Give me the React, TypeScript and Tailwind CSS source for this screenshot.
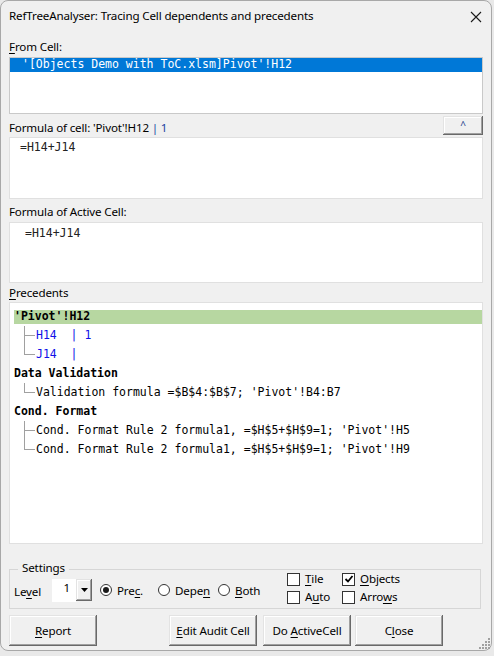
import React from "react";

const btn3d =
  "bg-[#f0f0f0] shadow-[inset_-1px_-1px_0_#696969,inset_1px_1px_0_#e3e3e3,inset_-2px_-2px_0_#a0a0a0,inset_2px_2px_0_#ffffff]";

function U({ children }: { children: React.ReactNode }) {
  return <span className="underline underline-offset-[2px]">{children}</span>;
}

function Connector({ last }: { last: boolean }) {
  return (
    <div className="flex h-full w-[22px] shrink-0 flex-col">
      <div className="ml-[10px] h-1/2 w-[11px] border-b border-l border-[#a0a0a0]" />
      <div className={"ml-[10px] h-1/2 w-[11px] " + (last ? "" : "border-l border-[#a0a0a0]")} />
    </div>
  );
}

function Radio({ checked, label, w }: { checked: boolean; label: React.ReactNode; w: string }) {
  return (
    <div className={"flex items-center gap-[5px] " + w}>
      <div className="flex h-[12px] w-[12px] items-center justify-center rounded-full border border-[#333] bg-white">
        {checked && <div className="h-[6px] w-[6px] rounded-full bg-[#1a1a1a]" />}
      </div>
      <span>{label}</span>
    </div>
  );
}

function Check({ checked, label }: { checked: boolean; label: React.ReactNode }) {
  return (
    <div className="flex h-[18px] items-center gap-[5px]">
      <div className="flex h-[13px] w-[13px] items-center justify-center border border-[#333] bg-white">
        {checked && (
          <svg width="10" height="10" viewBox="0 0 10 10">
            <path d="M1.5 5 L4 7.5 L8.5 2" fill="none" stroke="#000" strokeWidth="1.8" />
          </svg>
        )}
      </div>
      <span className="-mt-[1px]">{label}</span>
    </div>
  );
}

export default function App() {
  const mono = "font-['DejaVu_Sans_Mono',monospace] text-[11.5px] tracking-normal";
  return (
    <div className="relative h-[656px] w-[494px] overflow-hidden bg-[#e9e9e9] font-['Noto_Sans',sans-serif] text-[11.6px] tracking-[-0.15px] text-black">
      <div className="relative flex h-[651px] w-[492px] flex-col rounded-[8px] border border-[#a8a8a8] bg-[#f0f0f0]">
        {/* title bar */}
        <div className="flex h-[31px] shrink-0 items-center justify-between pl-[8px] pr-[9px]">
          <span className="-mt-[1px] leading-[16px]">RefTreeAnalyser: Tracing Cell dependents and precedents</span>
          <svg width="12" height="12" viewBox="0 0 12 12">
            <path d="M1 1 L11 11 M11 1 L1 11" stroke="#1a1a1a" strokeWidth="1.1" />
          </svg>
        </div>

        <div className="flex flex-col px-[8px]">
          <div className="mt-[7px] leading-[16px]">
            <U>F</U>rom Cell:
          </div>
          <div className="mt-[2px] h-[57px] border border-[#c9c9c9] bg-white">
            <div className={"flex h-[14px] items-center bg-[#0078d7] pl-[12px] text-white " + mono}>
              '[Objects Demo with ToC.xlsm]Pivot'!H12
            </div>
          </div>

          <div className="flex h-[23px] items-end justify-between">
            <div className="mb-[1px] leading-[16px]">
              Formula of cell: 'Pivot'!H12 <span className="text-[#1b3fa0]">| 1</span>
            </div>
            <div className={"mb-[2px] flex h-[19px] w-[40px] items-center justify-center text-[10px] text-[#1a3a8a] " + btn3d}>
              ^
            </div>
          </div>
          <div className="h-[62px] border border-[#e0e0e0] bg-white pl-[10px] pt-[2px]">
            <div className={"leading-[14px] text-[#222] " + mono}>=H14+J14</div>
          </div>

          <div className="mt-[5px] leading-[16px]">Formula of Active Cell:</div>
          <div className="mt-[2px] h-[61px] border border-[#e0e0e0] bg-white pl-[15px] pt-[3px]">
            <div className={"leading-[14px] text-[#222] " + mono}>=H14+J14</div>
          </div>

          <div className="mt-[2px] leading-[16px]">
            <U>P</U>recedents
          </div>
          <div className={"mt-[1px] h-[242px] border border-[#e0e0e0] bg-white pl-[4px] pt-[4px] " + mono}>
            <div className="flex h-[19px] items-center">
              <div className="flex h-[14px] w-full items-center bg-[#b7d7a1] font-bold">'Pivot'!H12</div>
            </div>
            <div className="flex h-[19px] items-center text-[#1010e8]">
              <Connector last={false} />
              <span className="whitespace-pre">H14  | 1</span>
            </div>
            <div className="flex h-[19px] items-center text-[#1010e8]">
              <Connector last={true} />
              <span className="whitespace-pre">J14  |</span>
            </div>
            <div className="flex h-[19px] items-center font-bold">Data Validation</div>
            <div className="flex h-[19px] items-center">
              <Connector last={true} />
              <span className="whitespace-pre">Validation formula =$B$4:$B$7; 'Pivot'!B4:B7</span>
            </div>
            <div className="flex h-[19px] items-center font-bold">Cond. Format</div>
            <div className="flex h-[19px] items-center">
              <Connector last={false} />
              <span className="whitespace-pre">Cond. Format Rule 2 formula1, =$H$5+$H$9=1; 'Pivot'!H5</span>
            </div>
            <div className="flex h-[19px] items-center">
              <Connector last={true} />
              <span className="whitespace-pre">Cond. Format Rule 2 formula1, =$H$5+$H$9=1; 'Pivot'!H9</span>
            </div>
          </div>

          {/* settings group */}
          <div className="relative mt-[25px] flex h-[40px] w-[472px] items-start border border-[#d6d6d6] pl-[4px]">
            <span className="absolute -top-[10px] left-[8px] bg-[#f0f0f0] px-[4px] leading-[16px]">Settings</span>
            <div className="mt-[9px] flex h-[23px] items-center">
              <span className="w-[38px] pt-[2px]">
                Le<U>v</U>el
              </span>
              <div className="flex h-[23px] w-[40px]">
                <div className="flex h-full w-[24px] items-start justify-end bg-white pr-[6px]">1</div>
                <div className={"flex h-[22px] w-[16px] items-center justify-center " + btn3d}>
                  <svg width="7" height="4" viewBox="0 0 7 4">
                    <path d="M0 0 H7 L3.5 4 Z" fill="#000" />
                  </svg>
                </div>
              </div>
              <div className="ml-[8px] flex items-center">
                <Radio checked={true} w="w-[58px]" label={<>Pre<U>c</U>.</>} />
                <Radio checked={false} w="w-[60px]" label={<>Depe<U>n</U></>} />
                <Radio checked={false} w="w-[69px]" label={<><U>B</U>oth</>} />
              </div>
            </div>
            <div className="flex w-[55px] flex-col">
              <Check checked={false} label={<><U>T</U>ile</>} />
              <Check checked={false} label={<>A<U>u</U>to</>} />
            </div>
            <div className="flex flex-col">
              <Check checked={true} label={<><U>O</U>bjects</>} />
              <Check checked={false} label={<>Arro<U>w</U>s</>} />
            </div>
          </div>

          {/* buttons */}
          <div className="mt-[6px] flex h-[31px]">
            <div className={"flex h-full w-[88px] items-center justify-center " + btn3d}>
              <span><U>R</U>eport</span>
            </div>
            <div className={"ml-[72px] flex h-full w-[88px] items-center justify-center " + btn3d}>
              <span><U>E</U>dit Audit Cell</span>
            </div>
            <div className={"ml-[6px] flex h-full w-[88px] items-center justify-center " + btn3d}>
              <span>Do <U>A</U>ctiveCell</span>
            </div>
            <div className={"ml-[4px] flex h-full w-[88px] items-center justify-center " + btn3d}>
              <span>C<U>l</U>ose</span>
            </div>
          </div>
        </div>

        <svg className="absolute bottom-[1px] right-[1px]" width="12" height="12" viewBox="0 0 12 12">
          {[
            [10, 1],
            [7, 4],
            [10, 4],
            [4, 7],
            [7, 7],
            [10, 7],
            [1, 10],
            [4, 10],
            [7, 10],
            [10, 10],
          ].map(([x, y], i) => (
            <rect key={i} x={x} y={y} width="2" height="2" fill="#a0a0a0" />
          ))}
        </svg>
      </div>
    </div>
  );
}
